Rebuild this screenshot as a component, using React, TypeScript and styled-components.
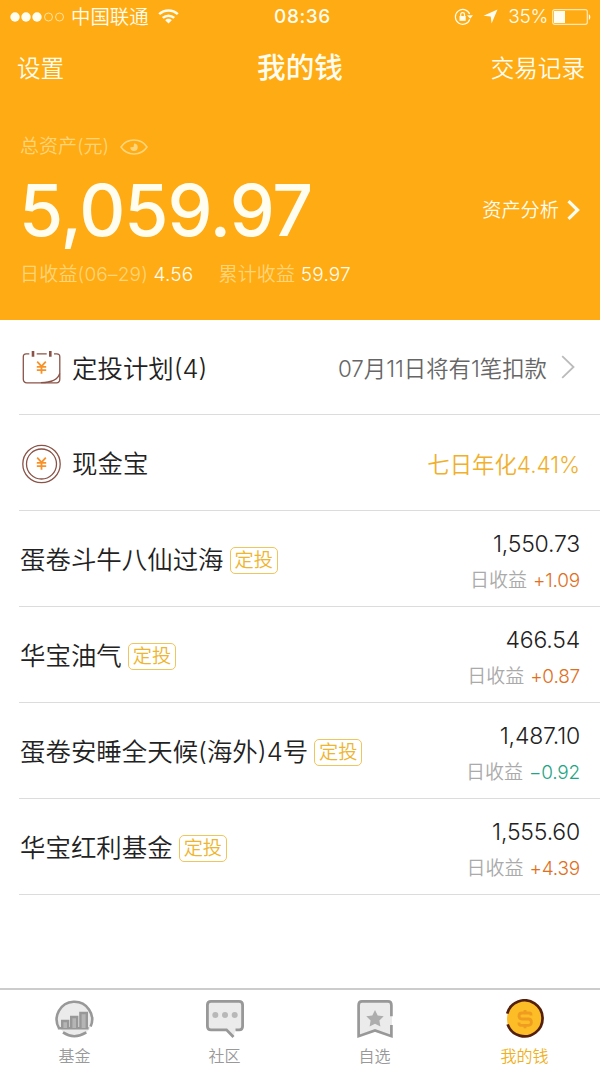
import React from "react";
import styled, { createGlobalStyle } from "styled-components";

const Global = createGlobalStyle`
  * { box-sizing: border-box; }
  body {
    margin: 0;
    background: #fff;
    font-family: Inter, "Noto Sans CJK SC", sans-serif;
    font-weight: 350;
    color: #333;
  }
`;

const Screen = styled.div`
  width: 600px;
  height: 1067px;
  display: flex;
  flex-direction: column;
  background: #fff;
  overflow: hidden;
  white-space: nowrap;
`;

const Hero = styled.header`
  height: 320px;
  background: #ffab13;
  color: #fffdf0;
  display: flex;
  flex-direction: column;
`;

const StatusBar = styled.div`
  height: 33px;
  padding: 0 9px 0 10px;
  display: grid;
  grid-template-columns: 1fr auto 1fr;
  align-items: center;
`;

const StatusGroup = styled.div<{ $end?: boolean }>`
  display: flex;
  align-items: center;
  justify-content: ${(p) => (p.$end ? "flex-end" : "flex-start")};
`;

const Carrier = styled.span`
  margin: 0 9px 0 7px;
  padding-top: 1px;
  font-size: 19.4px;
  line-height: 32px;
`;

const Clock = styled.span`
  padding: 1px 0 0 4px;
  font-size: 19px;
  font-weight: 500;
  line-height: 32px;
  letter-spacing: 0.6px;
`;

const Percent = styled.span`
  margin: 0 4px 0 10px;
  padding-top: 1px;
  font-size: 19px;
  line-height: 32px;
  letter-spacing: -0.3px;
`;

const Spacer = styled.span`
  width: 10px;
`;

const NavBar = styled.nav`
  height: 70px;
  padding: 0 15px 0 17px;
  display: grid;
  grid-template-columns: 1fr auto 1fr;
  align-items: center;
  line-height: 40px;
`;

const NavLink = styled.span<{ $end?: boolean }>`
  padding-top: 1px;
  font-size: 23.6px;
  text-align: ${(p) => (p.$end ? "right" : "left")};
`;

const NavTitle = styled.h1`
  margin: 0;
  padding-right: 2px;
  font-size: 28.6px;
  font-weight: 500;
`;

const Summary = styled.section`
  padding: 29px 20px 0;
  display: flex;
  flex-direction: column;
`;

const Caption = styled.div`
  height: 28px;
  display: flex;
  align-items: center;
  gap: 11px;
  font-size: 19px;
  line-height: 26px;
  color: #ffd57b;

  span {
    padding-top: 2px;
  }

  svg {
    margin-top: 2px;
  }
`;

const BalanceRow = styled.div`
  height: 96px;
  padding-top: 2px;
  display: flex;
  align-items: center;
  justify-content: space-between;
`;

const Balance = styled.strong`
  margin: 2px 0 0 -1px;
  font-size: 71.5px;
  line-height: 90px;
  font-weight: 450;
  letter-spacing: -1px;
`;

const Analysis = styled.span`
  display: flex;
  align-items: center;
  gap: 8px;
  font-size: 19.2px;
  line-height: 28px;
  margin-top: 2px;
`;

const Earnings = styled.div`
  height: 32px;
  display: flex;
  align-items: center;
  gap: 25px;
  font-size: 19px;
  letter-spacing: 0.2px;
  color: #ffd57b;

  b {
    font-weight: 350;
    color: #fffdf0;
  }
`;

const List = styled.main`
  flex: 1;
  padding-left: 19px;
`;

const Row = styled.div<{ $first?: boolean }>`
  height: ${(p) => (p.$first ? 95 : 96)}px;
  padding: 0 20px 0 1px;
  border-bottom: 1px solid #dcdcdc;
  display: flex;
  align-items: center;
  justify-content: space-between;
`;

const RowTitle = styled.div`
  padding-top: 3px;
  display: flex;
  align-items: center;
  font-size: 25.45px;
  line-height: 40px;
  color: #222;

  svg {
    margin: -1px 11px 0 1px;
  }
`;

const Note = styled.span<{ $accent?: boolean }>`
  display: flex;
  align-items: center;
  gap: 14px;
  font-size: 22.4px;
  color: ${(p) => (p.$accent ? "#f0b02c" : "#666")};
`;

const Tag = styled.span`
  height: 27px;
  margin: 0 0 0 6px;
  padding: 0 4px;
  border: 1.5px solid #efc55c;
  border-radius: 5px;
  font-size: 19.2px;
  line-height: 25px;
  color: #eeb52f;
`;

const Figures = styled.div`
  padding-top: 7px;
  display: flex;
  flex-direction: column;
  align-items: flex-end;
`;

const Amount = styled.span`
  font-size: 23px;
  line-height: 36px;
  letter-spacing: -0.2px;
  color: #222;
`;

const Daily = styled.span<{ $down?: boolean }>`
  font-size: 19px;
  line-height: 37px;
  color: #aaa;

  b {
    margin-left: 6px;
    font-weight: 350;
    letter-spacing: -0.2px;
    color: ${(p) => (p.$down ? "#1fa585" : "#e0701e")};
  }
`;

const TabBar = styled.footer`
  height: 79px;
  border-top: 2px solid #ccc;
  display: grid;
  grid-template-columns: repeat(4, 1fr);
`;

const Tab = styled.div<{ $active?: boolean }>`
  padding: 9px 1px 0 0;
  display: flex;
  flex-direction: column;
  align-items: center;
  font-size: 16px;
  line-height: 34px;
  color: ${(p) => (p.$active ? "#efb020" : "#999")};
`;

const Signal = () => (
  <svg width="54" height="12" viewBox="0 0 54 12">
    {[5, 16, 27].map((x) => (
      <circle key={x} cx={x} cy="6" r="4.7" fill="#fffdf0" />
    ))}
    {[38.5, 49.5].map((x) => (
      <circle key={x} cx={x} cy="6" r="4" fill="none" stroke="#ffe2a0" strokeWidth="1" />
    ))}
  </svg>
);

const Wifi = () => (
  <svg width="21" height="15" viewBox="0 0 21 15" fill="none" stroke="#fffdf0" strokeWidth="2.5">
    <path d="M1.2 5.2C6.5 .1 14.5 .1 19.8 5.2" />
    <path d="M4.8 8.9C8 5.9 13 5.9 16.2 8.9" />
    <path d="M7.2 11.2C9 9.4 12 9.4 13.8 11.2L10.5 14.4Z" fill="#fffdf0" stroke="none" />
  </svg>
);

const RotationLock = () => (
  <svg width="19" height="18" viewBox="0 0 19 18" fill="none" stroke="#fffdf0" strokeWidth="1.2">
    <path d="M15.8 11.2A7.4 7.4 0 1 1 15.6 6" />
    <path d="M13 7.2h6l-2.8 3.6z" fill="#fffdf0" stroke="none" />
    <rect x="5.5" y="8" width="6.2" height="4.8" fill="#fffdf0" stroke="none" />
    <path d="M6.7 8V6.5a1.9 1.9 0 0 1 3.8 0V8" />
  </svg>
);

const Locator = () => (
  <svg width="15" height="15" viewBox="0 0 15 15">
    <path d="M14.5.5 8.6 14.5 7.7 7.6.5 6.7Z" fill="#fffdf0" />
  </svg>
);

const Battery = () => (
  <svg width="39" height="16" viewBox="0 0 39 16">
    <rect x=".7" y=".7" width="34.6" height="14.6" rx="2" fill="none" stroke="#ffe8b5" strokeWidth="1.2" />
    <rect x="2" y="2" width="11" height="12" fill="#fffdf0" />
    <path d="M36.8 5.2c2 .8 2 4.8 0 5.6z" fill="#fffdf0" />
  </svg>
);

const Eye = () => (
  <svg width="28" height="18" viewBox="0 0 28 18" fill="none" stroke="#ffd57b" strokeWidth="1.5">
    <path d="M1 9C7-.2 21-.2 27 9 21 18.2 7 18.2 1 9Z" />
    <path d="M14 5.5a3.7 3.7 0 1 1-3.7 3.7L13.6 9Z" fill="#ffd57b" stroke="none" />
  </svg>
);

const Chevron = ({ bold }: { bold?: boolean }) =>
  bold ? (
    <svg width="13" height="20" viewBox="0 0 13 20" fill="none" stroke="#fffdf0" strokeWidth="3.2">
      <path d="M1.5 1.2 10.6 10 1.5 18.8" />
    </svg>
  ) : (
    <svg width="19" height="24" viewBox="0 0 19 24" fill="none" stroke="#bbb" strokeWidth="1.8">
      <path d="M1.2 1.2 12.5 12 1.2 22.8" />
    </svg>
  );

const Yen = () => (
  <path
    d="M16.2 13.6 20.5 18.4 24.8 13.6M20.5 18.4V25.8M15.8 18.8H25.2M15.8 22.2H25.2"
    stroke="#f7922a"
    strokeWidth="1.8"
  />
);

const CalendarIcon = () => (
  <svg width="40" height="40" viewBox="0 0 40 40" fill="none" stroke="#8a5347" strokeWidth="1.3">
    <path d="M8.3 5.8H5.2Q2.3 5.8 2.3 8.8V31Q2.3 34.8 6 34.8H35.5Q38.8 34.8 38.8 31V8.8Q38.8 5.8 35.8 5.8H33M15.7 5.8H25.7" />
    <path d="M12 3V8.7M29.3 3V8.7" strokeWidth="2.6" />
    <path d="M38.7 25.5C37 31.5 30 34.5 20 34.7" />
    <Yen />
  </svg>
);

const CoinIcon = () => (
  <svg width="40" height="40" viewBox="0 0 40 40" fill="none" stroke="#8a5347" strokeWidth="1.3">
    <circle cx="20.5" cy="20" r="18.7" />
    <circle cx="20.5" cy="20" r="15" />
    <Yen />
  </svg>
);

const FundIcon = () => (
  <svg width="40" height="40" viewBox="0 0 40 40" fill="none" stroke="#989898" strokeWidth="2.6">
    <circle cx="20" cy="20" r="17.5" fill="#ebebeb" stroke="none" />
    <path d="M4 29.2A17.7 17.7 0 1 1 35.6 27.6M2.9 29.2H33.6M8 33.4Q19 41 31.3 33.4" />
    <g fill="#b5b5b5" strokeWidth="2.4">
      <path d="M7.2 29V22H13.2V29M16.2 29V18H22.2V29M25.4 29V14H31.8V29" />
    </g>
  </svg>
);

const ChatIcon = () => (
  <svg width="40" height="40" viewBox="0 0 40 40" strokeWidth="2.8">
    <path
      d="M30.5 30.8H34.2Q37.6 30.8 37.6 27.2V6Q37.6 2.4 34 2.4H6Q2.4 2.4 2.4 6V27.2Q2.4 30.8 6 30.8H21.5L28.5 38"
      fill="#ebebeb"
      stroke="#989898"
    />
    {[10.3, 20, 29.7].map((x) => (
      <circle key={x} cx={x} cy="16" r="3" fill="#b8b8b8" />
    ))}
  </svg>
);

const BookmarkIcon = () => (
  <svg width="40" height="40" viewBox="0 0 40 40">
    <path d="M4 2.4H37V38L20 31.5 4 38Z" fill="#ebebeb" />
    <path
      d="M36.4 17.2V6.2Q36.4 2.4 33 2.4H7Q3.6 2.4 3.6 6.2V37.2L20 31.5 36.4 37.2V26"
      fill="none"
      stroke="#989898"
      strokeWidth="2.7"
    />
    <path d="m20 11 2.7 5.4 6 .9-4.3 4.2 1 6-5.4-2.8-5.4 2.8 1-6-4.3-4.2 6-.9Z" fill="#adadad" />
  </svg>
);

const MoneyIcon = () => (
  <svg width="40" height="40" viewBox="0 0 40 40" fill="none">
    <circle cx="20" cy="20" r="18" fill="#fcbd26" />
    <path d="M2.2 14.6A18 18 0 1 1 2.6 25.4" stroke="#54200d" strokeWidth="2.7" />
    <path
      d="M26 16.6V15.4Q26 14 24 14H17Q14 14 14 16.9T17 20H23.4Q26.4 20 26.4 23.2T23.4 26.3H16Q14 26.3 14 24.6V23.6M20 11V14M20 26.3V29.3"
      stroke="#f09c20"
      strokeWidth="2.8"
    />
  </svg>
);

const funds = [
  { name: "蛋卷斗牛八仙过海", amount: "1,550.73", daily: "+1.09" },
  { name: "华宝油气", amount: "466.54", daily: "+0.87" },
  { name: "蛋卷安睡全天候(海外)4号", amount: "1,487.10", daily: "−0.92" },
  { name: "华宝红利基金", amount: "1,555.60", daily: "+4.39" },
];

export default function App() {
  return (
    <Screen>
      <Global />
      <Hero>
        <StatusBar>
          <StatusGroup>
            <Signal />
            <Carrier>中国联通</Carrier>
            <Wifi />
          </StatusGroup>
          <Clock>08:36</Clock>
          <StatusGroup $end>
            <RotationLock />
            <Spacer />
            <Locator />
            <Percent>35%</Percent>
            <Battery />
          </StatusGroup>
        </StatusBar>
        <NavBar>
          <NavLink>设置</NavLink>
          <NavTitle>我的钱</NavTitle>
          <NavLink $end>交易记录</NavLink>
        </NavBar>
        <Summary>
          <Caption>
            <span>总资产(元)</span>
            <Eye />
          </Caption>
          <BalanceRow>
            <Balance>5,059.97</Balance>
            <Analysis>
              资产分析
              <Chevron bold />
            </Analysis>
          </BalanceRow>
          <Earnings>
            <span>
              日收益(06–29) <b>4.56</b>
            </span>
            <span>
              累计收益 <b>59.97</b>
            </span>
          </Earnings>
        </Summary>
      </Hero>
      <List>
        <Row $first>
          <RowTitle>
            <CalendarIcon />
            定投计划(4)
          </RowTitle>
          <Note>
            07月11日将有1笔扣款
            <Chevron />
          </Note>
        </Row>
        <Row>
          <RowTitle>
            <CoinIcon />
            现金宝
          </RowTitle>
          <Note $accent>七日年化4.41%</Note>
        </Row>
        {funds.map((f) => (
          <Row key={f.name}>
            <RowTitle>
              {f.name}
              <Tag>定投</Tag>
            </RowTitle>
            <Figures>
              <Amount>{f.amount}</Amount>
              <Daily $down={f.daily.startsWith("−")}>
                日收益<b>{f.daily}</b>
              </Daily>
            </Figures>
          </Row>
        ))}
      </List>
      <TabBar>
        <Tab>
          <FundIcon />
          基金
        </Tab>
        <Tab>
          <ChatIcon />
          社区
        </Tab>
        <Tab>
          <BookmarkIcon />
          自选
        </Tab>
        <Tab $active>
          <MoneyIcon />
          我的钱
        </Tab>
      </TabBar>
    </Screen>
  );
}
